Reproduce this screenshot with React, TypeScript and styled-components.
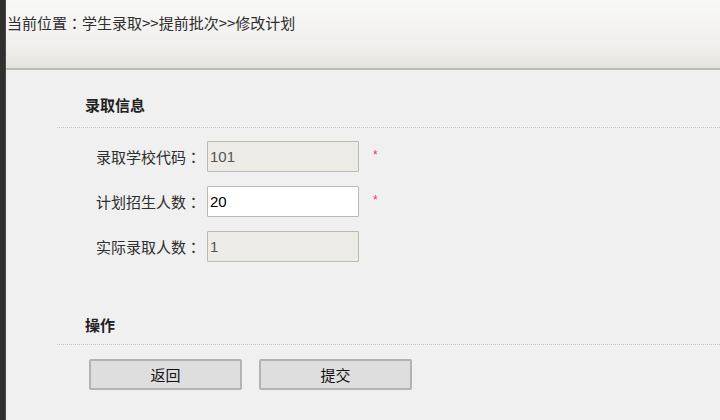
import React from "react";
import styled, { createGlobalStyle } from "styled-components";

const GlobalStyle = createGlobalStyle`
  html, body {
    margin: 0;
    padding: 0;
    width: 720px;
    height: 420px;
    overflow: hidden;
    background: #f0f0f0;
  }
  * { box-sizing: border-box; }
`;

const CJK = `"Noto Sans CJK SC", "Noto Sans", sans-serif`;

const Frame = styled.div`
  display: flex;
  width: 720px;
  height: 420px;
  font-family: ${CJK};
  color: #333;
`;

const EdgeBar = styled.div`
  width: 6px;
  flex: none;
  background: #2f2f2f;
  border-right: 1px solid #4a4a4a;
`;

const Main = styled.div`
  flex: 1;
  display: flex;
  flex-direction: column;
`;

const Header = styled.div`
  height: 70px;
  padding: 13px 0 0 1px;
  background: linear-gradient(#f8f8f6, #f0efed 70%, #e4e2de);
  border-bottom: 2px solid #bebcb8;
  font-size: 15px;
  line-height: 20px;
  color: #2e2e2e;
`;

// full-width colon drawn centred in its cell, as in the original
const Colon = styled.span`
  font-family: "Noto Sans CJK TC", "Noto Sans CJK SC", sans-serif;
`;

const Content = styled.div`
  padding-left: 51px;
`;

const SectionHead = styled.div<{ $top: number; $bottom: number }>`
  margin-top: ${(p) => p.$top}px;
  padding: 0 0 ${(p) => p.$bottom}px 28px;
  border-bottom: 1px dotted #c4c4c4;
  font-size: 15px;
  line-height: 20px;
  font-weight: bold;
  color: #222;
`;

const Fields = styled.div`
  display: flex;
  flex-direction: column;
  gap: 14px;
  margin-top: 13px;
  padding-left: 39px;
`;

const Row = styled.div`
  display: flex;
  align-items: center;
  height: 31px;
`;

const Label = styled.label`
  width: 111px;
  font-size: 15px;
  color: #2e2e2e;
  white-space: nowrap;
`;

const Field = styled.input<{ $locked?: boolean }>`
  width: 152px;
  height: 31px;
  padding: 0 2px;
  border: 1px solid #b9b9b6;
  border-radius: 1px;
  outline: none;
  font-family: "Liberation Sans", "DejaVu Sans", sans-serif;
  font-size: 15px;
  color: ${(p) => (p.$locked ? "#555" : "#000")};
  background: ${(p) => (p.$locked ? "#ecebe5" : "#fff")};
`;

const Required = styled.span`
  margin-left: 14px;
  margin-top: -4px;
  font-family: "Liberation Sans", sans-serif;
  font-size: 12px;
  color: #f2336a;
`;

const Actions = styled.div`
  display: flex;
  gap: 17px;
  margin-top: 14px;
  padding-left: 32px;
`;

const Button = styled.button`
  width: 153px;
  height: 31px;
  background: #dedede;
  border: 2px solid #b3b3b3;
  border-radius: 2px;
  font-family: ${CJK};
  font-size: 15px;
  color: #111;
  padding: 0;
`;

const fields = [
  { label: "录取学校代码", value: "101", locked: true, required: true },
  { label: "计划招生人数", value: "20", locked: false, required: true },
  { label: "实际录取人数", value: "1", locked: true, required: false },
];

export default function App() {
  return (
    <Frame>
      <GlobalStyle />
      <EdgeBar />
      <Main>
        <Header>
          当前位置<Colon>：</Colon>学生录取&gt;&gt;提前批次&gt;&gt;修改计划
        </Header>
        <Content>
          <SectionHead $top={25} $bottom={12}>录取信息</SectionHead>
          <Fields>
            {fields.map((f) => (
              <Row key={f.label}>
                <Label>
                  {f.label}
                  <Colon>：</Colon>
                </Label>
                <Field defaultValue={f.value} readOnly={f.locked} $locked={f.locked} />
                {f.required && <Required>*</Required>}
              </Row>
            ))}
          </Fields>
          <SectionHead $top={53} $bottom={9}>操作</SectionHead>
          <Actions>
            <Button>返回</Button>
            <Button>提交</Button>
          </Actions>
        </Content>
      </Main>
    </Frame>
  );
}
